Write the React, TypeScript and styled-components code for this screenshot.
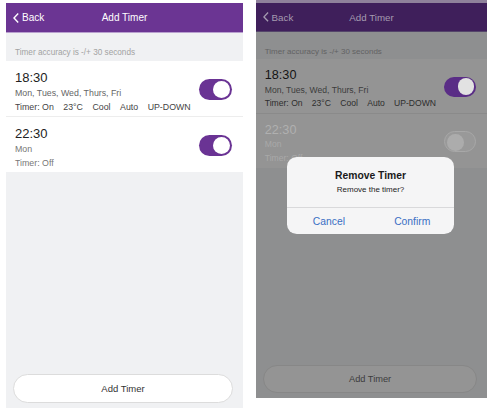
import React from "react";
import styled, { createGlobalStyle, ThemeProvider } from "styled-components";

const GlobalStyle = createGlobalStyle`
  html, body { margin: 0; padding: 0; background: #ffffff; }
  body { font-family: "Liberation Sans", Arial, sans-serif; }
  * { box-sizing: border-box; }
`;

const light = {
  strip: "transparent",
  headerBg: "#6b3593",
  headerLine: "#b9a0cf",
  headerText: "#ffffff",
  screenBg: "#f0f1f3",
  noticeText: "#a2a2a2",
  rowBg: "#ffffff",
  divider: "#ededed",
  time: "#222222",
  days: "#666666",
  specs: "#444444",
  mutedTime: "#222222",
  mutedSub: "#777777",
  toggleOn: "#6a3394",
  knobOn: "#ffffff",
  toggleOff: "#e5e5e5",
  toggleOffBorder: "#dddddd",
  knobOff: "#ffffff",
  buttonBg: "#ffffff",
  buttonBorder: "#dcdcdc",
  buttonText: "#333333",
};

const dim = {
  strip: "#8f819b",
  headerBg: "#3f1f5b",
  headerLine: "#54456a",
  headerText: "#a59bb0",
  screenBg: "#8e8f90",
  noticeText: "#626263",
  rowBg: "#949494",
  divider: "#8a8a8a",
  time: "#151515",
  days: "#3c3c3c",
  specs: "#2e2e2e",
  mutedTime: "#b0b0b0",
  mutedSub: "#a9a9a9",
  toggleOn: "#5a2d86",
  knobOn: "#e2e2e2",
  toggleOff: "#999999",
  toggleOffBorder: "#a8a8a8",
  knobOff: "#acacac",
  buttonBg: "#949494",
  buttonBorder: "#878787",
  buttonText: "#3c3c3c",
};

type T = typeof light;

const Page = styled.div`
  display: flex;
  align-items: flex-start;
  gap: 13px;
  padding-left: 6px;
  width: 498px;
  height: 409px;
  overflow: hidden;
`;

const Phone = styled.div<{ $scale: number; $top: number }>`
  zoom: ${(p) => p.$scale};
  margin-top: ${(p) => p.$top}px;
  width: 237px;
  display: flex;
  flex-direction: column;
`;

const StatusStrip = styled.div<{ theme: T }>`
  height: 3px;
  background: ${(p) => p.theme.strip};
`;

const Screen = styled.div<{ theme: T }>`
  position: relative;
  height: 405px;
  display: flex;
  flex-direction: column;
  background: ${(p) => p.theme.screenBg};
  overflow: hidden;
`;

const Header = styled.div<{ theme: T }>`
  height: 30px;
  flex-shrink: 0;
  display: grid;
  grid-template-columns: 1fr auto 1fr;
  align-items: center;
  background: ${(p) => p.theme.headerBg};
  border-bottom: 1px solid ${(p) => p.theme.headerLine};
  color: ${(p) => p.theme.headerText};
  font-size: 10px;
  padding: 0 7px;
`;

const BackLink = styled.div`
  display: flex;
  align-items: center;
  gap: 3px;
`;

const Title = styled.div`
  text-align: center;
`;

const Notice = styled.div<{ theme: T }>`
  height: 28px;
  flex-shrink: 0;
  display: flex;
  align-items: flex-end;
  padding: 0 0 4px 9px;
  font-size: 8.2px;
  color: ${(p) => p.theme.noticeText};
`;

const List = styled.div<{ theme: T }>`
  display: flex;
  flex-direction: column;
  background: ${(p) => p.theme.rowBg};
`;

const Row = styled.div<{ theme: T; $divider: boolean }>`
  height: ${(p) => (p.$divider ? 56 : 55)}px;
  display: flex;
  align-items: center;
  justify-content: space-between;
  padding: 0 11px 0 9px;
  border-bottom: ${(p) => (p.$divider ? `1px solid ${p.theme.divider}` : "none")};
`;

const Info = styled.div`
  display: flex;
  flex-direction: column;
  align-self: flex-start;
  padding-top: 9px;
`;

const Time = styled.div<{ theme: T; $muted: boolean }>`
  font-size: 13px;
  line-height: 16px;
  color: ${(p) => (p.$muted ? p.theme.mutedTime : p.theme.time)};
`;

const Sub = styled.div<{ theme: T; $muted: boolean; $strong?: boolean }>`
  display: flex;
  gap: 9.5px;
  font-size: 8.8px;
  line-height: 14px;
  color: ${(p) =>
    p.$muted ? p.theme.mutedSub : p.$strong ? p.theme.specs : p.theme.days};
`;

const Toggle = styled.div<{ theme: T; $on: boolean }>`
  width: 33px;
  height: 21px;
  border-radius: 11px;
  padding: 2px;
  display: flex;
  justify-content: ${(p) => (p.$on ? "flex-end" : "flex-start")};
  background: ${(p) => (p.$on ? p.theme.toggleOn : p.theme.toggleOff)};
  border: ${(p) => (p.$on ? "none" : `1px solid ${p.theme.toggleOffBorder}`)};
  margin-top: 1px;
`;

const Knob = styled.div<{ theme: T; $on: boolean }>`
  width: 17px;
  height: 17px;
  border-radius: 50%;
  background: ${(p) => (p.$on ? p.theme.knobOn : p.theme.knobOff)};
`;

const Filler = styled.div`
  flex: 1;
  display: flex;
  align-items: flex-end;
  padding: 0 10px 5px 7px;
`;

const AddButton = styled.div<{ theme: T }>`
  width: 100%;
  height: 29px;
  border-radius: 15px;
  display: flex;
  align-items: center;
  justify-content: center;
  font-size: 9.5px;
  background: ${(p) => p.theme.buttonBg};
  border: 1px solid ${(p) => p.theme.buttonBorder};
  color: ${(p) => p.theme.buttonText};
`;

const Dialog = styled.div`
  position: absolute;
  top: 158px;
  left: 32px;
  width: 171px;
  height: 79px;
  border-radius: 10px;
  background: #f5f5f6;
  display: flex;
  flex-direction: column;
`;

const DialogBody = styled.div`
  height: 52px;
  display: flex;
  flex-direction: column;
  align-items: center;
  padding-top: 13px;
  border-bottom: 1px solid #d9d9db;
`;

const DialogTitle = styled.div`
  font-size: 10.6px;
  font-weight: 700;
  line-height: 13px;
  color: #1a1a1a;
`;

const DialogText = styled.div`
  font-size: 8.2px;
  line-height: 12px;
  margin-top: 2px;
  color: #222222;
`;

const DialogActions = styled.div`
  flex: 1;
  display: grid;
  grid-template-columns: 1fr 1fr;
  align-items: center;
`;

const DialogButton = styled.div`
  text-align: center;
  font-size: 10.6px;
  color: #3a6fc4;
  padding-top: 1px;
`;

const Chevron = ({ color }: { color: string }) => (
  <svg width="6" height="10" viewBox="0 0 6 10">
    <path d="M5.2 0.6 L1 5 L5.2 9.4" fill="none" stroke={color} strokeWidth="1.4" />
  </svg>
);

type Timer = {
  time: string;
  days: string;
  specs: string[];
  on: boolean;
  muted: boolean;
  strong: boolean;
};

const ScreenView = ({
  timers,
  theme,
  dialog,
}: {
  timers: Timer[];
  theme: T;
  dialog?: boolean;
}) => (
  <ThemeProvider theme={theme}>
    <Screen>
      <Header>
        <BackLink>
          <Chevron color={theme.headerText} />
          <span>Back</span>
        </BackLink>
        <Title>Add Timer</Title>
        <div />
      </Header>
      <Notice>Timer accuracy is -/+ 30 seconds</Notice>
      <List>
        {timers.map((t, i) => (
          <Row key={t.time} $divider={i < timers.length - 1}>
            <Info>
              <Time $muted={t.muted && !t.on}>{t.time}</Time>
              <Sub $muted={t.muted}>{t.days}</Sub>
              <Sub $muted={t.muted} $strong={t.strong}>
                {t.specs.map((s) => (
                  <span key={s}>{s}</span>
                ))}
              </Sub>
            </Info>
            <Toggle $on={t.on}>
              <Knob $on={t.on} />
            </Toggle>
          </Row>
        ))}
      </List>
      <Filler>
        <AddButton>Add Timer</AddButton>
      </Filler>
      {dialog && (
        <Dialog>
          <DialogBody>
            <DialogTitle>Remove Timer</DialogTitle>
            <DialogText>Remove the timer?</DialogText>
          </DialogBody>
          <DialogActions>
            <DialogButton>Cancel</DialogButton>
            <DialogButton>Confirm</DialogButton>
          </DialogActions>
        </Dialog>
      )}
    </Screen>
  </ThemeProvider>
);

const first: Timer = {
  time: "18:30",
  days: "Mon, Tues, Wed, Thurs, Fri",
  specs: ["Timer: On", "23°C", "Cool", "Auto", "UP-DOWN"],
  on: true,
  muted: false,
  strong: true,
};

const leftTimers: Timer[] = [
  first,
  { time: "22:30", days: "Mon", specs: ["Timer: Off"], on: true, muted: true, strong: false },
];

const rightTimers: Timer[] = [
  first,
  { time: "22:30", days: "Mon", specs: ["Timer: Off"], on: false, muted: true, strong: false },
];

export default function App() {
  return (
    <>
      <GlobalStyle />
      <Page>
        <Phone $scale={1} $top={3}>
          <ScreenView timers={leftTimers} theme={light} />
        </Phone>
        <Phone $scale={0.975} $top={0}>
          <ThemeProvider theme={dim}>
            <StatusStrip />
          </ThemeProvider>
          <ScreenView timers={rightTimers} theme={dim} dialog />
        </Phone>
      </Page>
    </>
  );
}
